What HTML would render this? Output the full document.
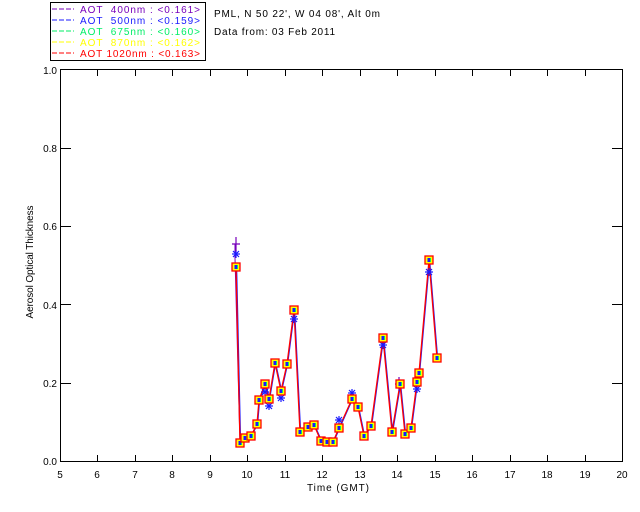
<!DOCTYPE html>
<html><head><meta charset="utf-8"><style>
html,body{margin:0;padding:0;background:#fff;}
svg{display:block;}
text{font-family:"Liberation Sans",sans-serif;font-size:10px;}
</style></head><body>
<svg width="640" height="512" viewBox="0 0 640 512" xmlns="http://www.w3.org/2000/svg">
<defs>
<g id="m">
<rect x="-4" y="-4" width="8" height="8" fill="#ffff00" stroke="#ff0000" stroke-width="1.3"/>
<rect x="-1.5" y="-2" width="3" height="4" fill="#1a1aff"/>
<rect x="1" y="-2" width="1" height="4" fill="#00ee66"/>
</g>
<g id="s" stroke="#1a1aff" stroke-width="1.2">
<line x1="-4" y1="0" x2="4" y2="0"/><line x1="0" y1="-4" x2="0" y2="4"/>
<line x1="-3" y1="-3" x2="3" y2="3"/><line x1="-3" y1="3" x2="3" y2="-3"/>
</g>
</defs>
<!-- legend -->
<rect x="50.5" y="2.5" width="155" height="58" fill="#fff" stroke="#000"/>
<g stroke-width="1" stroke-dasharray="5,2">
<line x1="52" y1="9" x2="74" y2="9" stroke="#7700bb"/>
<line x1="52" y1="20" x2="74" y2="20" stroke="#1a1aff"/>
<line x1="52" y1="31" x2="74" y2="31" stroke="#00ee66"/>
<line x1="52" y1="42" x2="74" y2="42" stroke="#ffff00"/>
<line x1="52" y1="53" x2="74" y2="53" stroke="#ff0000"/>
</g>
<text x="80" y="13" fill="#7700bb" textLength="120" lengthAdjust="spacing" xml:space="preserve">AOT  400nm : &lt;0.161&gt;</text>
<text x="80" y="24" fill="#1a1aff" textLength="120" lengthAdjust="spacing" xml:space="preserve">AOT  500nm : &lt;0.159&gt;</text>
<text x="80" y="35" fill="#00ee66" textLength="120" lengthAdjust="spacing" xml:space="preserve">AOT  675nm : &lt;0.160&gt;</text>
<text x="80" y="46" fill="#ffff00" textLength="120" lengthAdjust="spacing" xml:space="preserve">AOT  870nm : &lt;0.162&gt;</text>
<text x="80" y="57" fill="#ff0000" textLength="120" lengthAdjust="spacing" xml:space="preserve">AOT 1020nm : &lt;0.163&gt;</text>
<text x="214" y="17" fill="#000" textLength="166" lengthAdjust="spacing">PML, N 50 22', W 04 08', Alt 0m</text>
<text x="214" y="35" fill="#000" textLength="121" lengthAdjust="spacing">Data from: 03 Feb 2011</text>
<!-- axes -->
<rect x="60.5" y="69.5" width="562" height="392" fill="none" stroke="#000" stroke-width="1"/>
<g stroke="#000">
<path d="M97.5 461V455M135.5 461V455M172.5 461V455M210.5 461V455M247.5 461V455M285.5 461V455M322.5 461V455M360.5 461V455M397.5 461V455M435.5 461V455M472.5 461V455M510.5 461V455M547.5 461V455M585.5 461V455"/>
<path d="M97.5 70V76M135.5 70V76M172.5 70V76M210.5 70V76M247.5 70V76M285.5 70V76M322.5 70V76M360.5 70V76M397.5 70V76M435.5 70V76M472.5 70V76M510.5 70V76M547.5 70V76M585.5 70V76"/>
<path d="M61 383.5H71M61 304.5H71M61 226.5H71M61 148.5H71M612 383.5H622M612 304.5H622M612 226.5H622M612 148.5H622"/>
</g>
<g fill="#000" text-anchor="end">
<text x="57" y="465">0.0</text><text x="57" y="387">0.2</text><text x="57" y="309">0.4</text>
<text x="57" y="230">0.6</text><text x="57" y="152">0.8</text><text x="57" y="74">1.0</text>
</g>
<g fill="#000" text-anchor="middle">
<text x="60" y="478">5</text><text x="97" y="478">6</text><text x="135" y="478">7</text><text x="172" y="478">8</text><text x="210" y="478">9</text><text x="247" y="478">10</text><text x="285" y="478">11</text><text x="322" y="478">12</text><text x="360" y="478">13</text><text x="397" y="478">14</text><text x="435" y="478">15</text><text x="472" y="478">16</text><text x="510" y="478">17</text><text x="547" y="478">18</text><text x="585" y="478">19</text><text x="622" y="478">20</text>
<text x="338" y="491" textLength="62" lengthAdjust="spacing">Time (GMT)</text>
<text transform="translate(33,262) rotate(-90)" textLength="113" lengthAdjust="spacing">Aerosol Optical Thickness</text>
</g>
<!-- data -->
<polyline fill="none" stroke="#7700bb" stroke-width="1" points="235,244 235,258 240,443"/>
<polyline fill="none" stroke="#1a1aff" stroke-width="1" transform="translate(0.7,0)" points="236,267 240,443 245,438 251,436 257,424 259,400 265,384 269,399 275,363 281,391 287,364 294,310 300,432 308,427 314,425 321,441 327,442 333,442 339,428 352,399 358,407 364,436 371,426 383,338 392,432 400,384 405,434 411,428 417,382 419,373 429,260 437,358"/>
<polyline fill="none" stroke="#ff0000" stroke-width="1.3" points="236,267 240,443 245,438 251,436 257,424 259,400 265,384 269,399 275,363 281,391 287,364 294,310 300,432 308,427 314,425 321,441 327,442 333,442 339,428 352,399 358,407 364,436 371,426 383,338 392,432 400,384 405,434 411,428 417,382 419,373 429,260 437,358"/>
<g>
<use href="#s" x="236" y="254"/><use href="#s" x="294" y="319"/><use href="#s" x="352" y="393"/><use href="#s" x="339" y="420"/><use href="#s" x="383" y="345"/><use href="#s" x="429" y="272"/><use href="#s" x="269" y="406"/><use href="#s" x="281" y="398"/><use href="#s" x="265" y="392"/><use href="#s" x="417" y="389"/>
</g>
<path d="M236 237V251M232 244H240M399 377V391M395 384H403" stroke="#7700bb" stroke-width="1.2"/>
<g>
<use href="#m" x="236" y="267"/><use href="#m" x="240" y="443"/><use href="#m" x="245" y="438"/><use href="#m" x="251" y="436"/><use href="#m" x="257" y="424"/><use href="#m" x="259" y="400"/><use href="#m" x="265" y="384"/><use href="#m" x="269" y="399"/><use href="#m" x="275" y="363"/><use href="#m" x="281" y="391"/><use href="#m" x="287" y="364"/><use href="#m" x="294" y="310"/><use href="#m" x="300" y="432"/><use href="#m" x="308" y="427"/><use href="#m" x="314" y="425"/><use href="#m" x="321" y="441"/><use href="#m" x="327" y="442"/><use href="#m" x="333" y="442"/><use href="#m" x="339" y="428"/><use href="#m" x="352" y="399"/><use href="#m" x="358" y="407"/><use href="#m" x="364" y="436"/><use href="#m" x="371" y="426"/><use href="#m" x="383" y="338"/><use href="#m" x="392" y="432"/><use href="#m" x="400" y="384"/><use href="#m" x="405" y="434"/><use href="#m" x="411" y="428"/><use href="#m" x="417" y="382"/><use href="#m" x="419" y="373"/><use href="#m" x="429" y="260"/><use href="#m" x="437" y="358"/>
</g>
</svg>
</body></html>
